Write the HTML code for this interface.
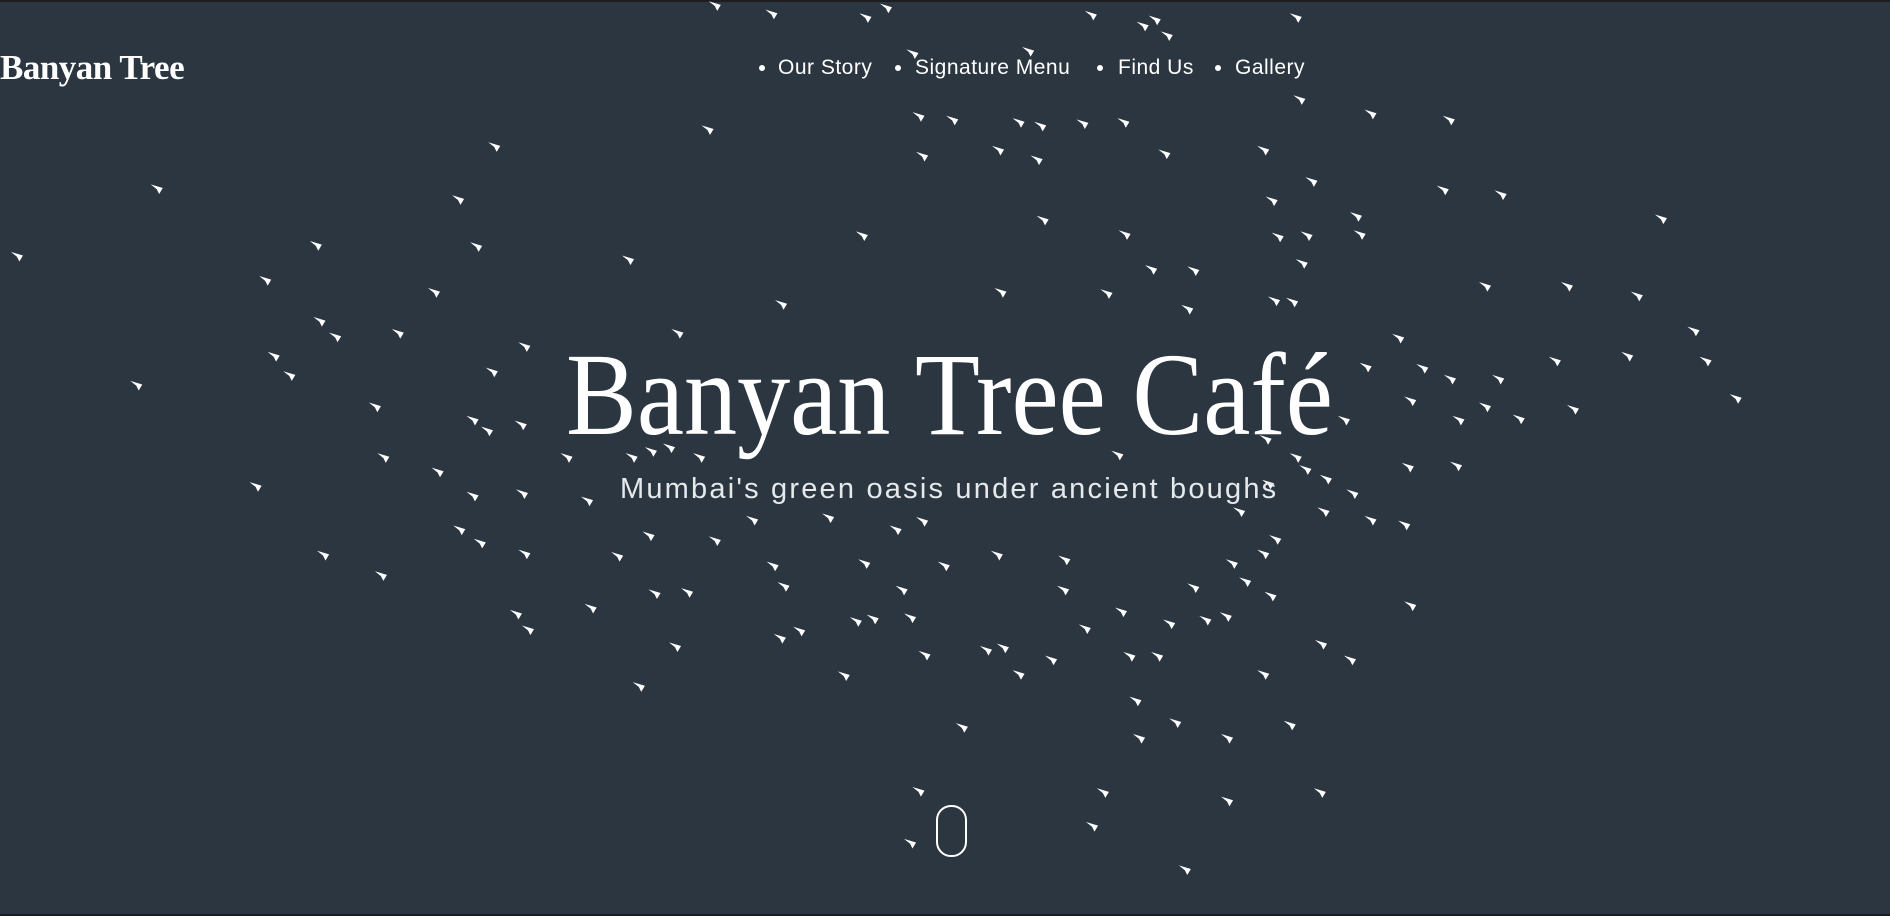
<!DOCTYPE html>
<html><head><meta charset="utf-8">
<style>
html,body{margin:0;padding:0;}
body{width:1890px;height:916px;background:#2b3641;position:relative;overflow:hidden;font-family:"Liberation Sans",sans-serif;color:#fff;}
.bar{position:absolute;left:0;width:1890px;height:2px;background:#1b1d20;}
.logo{position:absolute;left:0;top:49px;font-family:"Liberation Serif",serif;font-weight:bold;font-size:35px;line-height:38px;letter-spacing:-0.5px;}
.nav{position:absolute;top:56px;font-size:21px;line-height:24px;font-weight:500;letter-spacing:0.5px;}
.dot{position:absolute;top:65px;width:6px;height:6px;border-radius:50%;background:#fff;}
.title{position:absolute;left:566px;top:334px;font-family:"Liberation Serif",serif;font-size:118px;line-height:121px;white-space:nowrap;transform:scaleX(0.9);transform-origin:0 0;}
.sub{position:absolute;left:620px;top:473px;font-size:29px;line-height:32px;font-weight:300;color:#e6e9ec;letter-spacing:2.2px;white-space:nowrap;}
.mouse{position:absolute;left:936px;top:805px;width:27px;height:48px;border:2px solid #fff;border-radius:15px;}
svg{position:absolute;left:0;top:0;}
</style></head><body>
<div class="bar" style="top:0"></div>
<div class="bar" style="top:914px"></div>
<svg width="1890" height="916" viewBox="0 0 1568 760">
<defs><polygon id="b" points="-5,-4 5,-1 2,4 0,0" fill="#fff"/></defs>
<g>
<use href="#b" x="593" y="5"/><use href="#b" x="640" y="12"/><use href="#b" x="718" y="15"/><use href="#b" x="735" y="7"/><use href="#b" x="905" y="13"/><use href="#b" x="948" y="22"/><use href="#b" x="958" y="17"/><use href="#b" x="968" y="30"/><use href="#b" x="1075" y="15"/><use href="#b" x="757" y="45"/><use href="#b" x="853" y="43"/><use href="#b" x="1078" y="83"/><use href="#b" x="587" y="108"/><use href="#b" x="410" y="122"/><use href="#b" x="762" y="97"/><use href="#b" x="790" y="100"/><use href="#b" x="845" y="102"/><use href="#b" x="863" y="105"/><use href="#b" x="898" y="103"/><use href="#b" x="932" y="102"/><use href="#b" x="1137" y="95"/><use href="#b" x="1202" y="100"/><use href="#b" x="765" y="130"/><use href="#b" x="828" y="125"/><use href="#b" x="860" y="133"/><use href="#b" x="966" y="128"/><use href="#b" x="1048" y="125"/><use href="#b" x="130" y="157"/><use href="#b" x="380" y="166"/><use href="#b" x="1088" y="151"/><use href="#b" x="1197" y="158"/><use href="#b" x="1245" y="162"/><use href="#b" x="1055" y="167"/><use href="#b" x="865" y="183"/><use href="#b" x="1125" y="180"/><use href="#b" x="1128" y="195"/><use href="#b" x="933" y="195"/><use href="#b" x="1060" y="197"/><use href="#b" x="1084" y="196"/><use href="#b" x="715" y="196"/><use href="#b" x="1378" y="182"/><use href="#b" x="14" y="213"/><use href="#b" x="262" y="204"/><use href="#b" x="395" y="205"/><use href="#b" x="521" y="216"/><use href="#b" x="955" y="224"/><use href="#b" x="990" y="225"/><use href="#b" x="1080" y="219"/><use href="#b" x="220" y="233"/><use href="#b" x="360" y="243"/><use href="#b" x="830" y="243"/><use href="#b" x="918" y="244"/><use href="#b" x="1057" y="250"/><use href="#b" x="1072" y="251"/><use href="#b" x="985" y="257"/><use href="#b" x="1300" y="238"/><use href="#b" x="1232" y="238"/><use href="#b" x="1358" y="246"/><use href="#b" x="648" y="253"/><use href="#b" x="265" y="267"/><use href="#b" x="278" y="280"/><use href="#b" x="330" y="277"/><use href="#b" x="562" y="277"/><use href="#b" x="435" y="288"/><use href="#b" x="227" y="296"/><use href="#b" x="240" y="312"/><use href="#b" x="408" y="309"/><use href="#b" x="1405" y="275"/><use href="#b" x="1415" y="300"/><use href="#b" x="1350" y="296"/><use href="#b" x="1290" y="300"/><use href="#b" x="1160" y="281"/><use href="#b" x="1180" y="306"/><use href="#b" x="1203" y="315"/><use href="#b" x="1243" y="315"/><use href="#b" x="1133" y="305"/><use href="#b" x="113" y="320"/><use href="#b" x="311" y="338"/><use href="#b" x="392" y="349"/><use href="#b" x="404" y="358"/><use href="#b" x="432" y="353"/><use href="#b" x="1210" y="349"/><use href="#b" x="1232" y="338"/><use href="#b" x="1305" y="340"/><use href="#b" x="1260" y="348"/><use href="#b" x="1440" y="331"/><use href="#b" x="1170" y="333"/><use href="#b" x="1115" y="349"/><use href="#b" x="1075" y="380"/><use href="#b" x="1050" y="365"/><use href="#b" x="318" y="380"/><use href="#b" x="363" y="392"/><use href="#b" x="470" y="380"/><use href="#b" x="524" y="380"/><use href="#b" x="540" y="375"/><use href="#b" x="555" y="372"/><use href="#b" x="580" y="380"/><use href="#b" x="927" y="378"/><use href="#b" x="1083" y="390"/><use href="#b" x="1168" y="388"/><use href="#b" x="1208" y="387"/><use href="#b" x="1100" y="398"/><use href="#b" x="1052" y="402"/><use href="#b" x="1122" y="410"/><use href="#b" x="1098" y="425"/><use href="#b" x="1137" y="432"/><use href="#b" x="1165" y="436"/><use href="#b" x="212" y="404"/><use href="#b" x="392" y="412"/><use href="#b" x="433" y="410"/><use href="#b" x="487" y="416"/><use href="#b" x="624" y="432"/><use href="#b" x="687" y="430"/><use href="#b" x="743" y="440"/><use href="#b" x="765" y="433"/><use href="#b" x="1028" y="425"/><use href="#b" x="381" y="440"/><use href="#b" x="398" y="451"/><use href="#b" x="538" y="445"/><use href="#b" x="593" y="449"/><use href="#b" x="268" y="461"/><use href="#b" x="435" y="460"/><use href="#b" x="512" y="462"/><use href="#b" x="641" y="470"/><use href="#b" x="717" y="468"/><use href="#b" x="783" y="470"/><use href="#b" x="827" y="461"/><use href="#b" x="883" y="465"/><use href="#b" x="1048" y="460"/><use href="#b" x="1058" y="448"/><use href="#b" x="1022" y="468"/><use href="#b" x="1033" y="483"/><use href="#b" x="316" y="478"/><use href="#b" x="650" y="487"/><use href="#b" x="748" y="490"/><use href="#b" x="882" y="490"/><use href="#b" x="990" y="488"/><use href="#b" x="1054" y="495"/><use href="#b" x="543" y="493"/><use href="#b" x="570" y="492"/><use href="#b" x="490" y="505"/><use href="#b" x="428" y="510"/><use href="#b" x="438" y="523"/><use href="#b" x="710" y="516"/><use href="#b" x="724" y="514"/><use href="#b" x="755" y="513"/><use href="#b" x="930" y="508"/><use href="#b" x="970" y="518"/><use href="#b" x="1000" y="515"/><use href="#b" x="1017" y="512"/><use href="#b" x="1170" y="503"/><use href="#b" x="647" y="530"/><use href="#b" x="663" y="524"/><use href="#b" x="900" y="522"/><use href="#b" x="560" y="537"/><use href="#b" x="767" y="544"/><use href="#b" x="818" y="540"/><use href="#b" x="832" y="538"/><use href="#b" x="872" y="548"/><use href="#b" x="937" y="545"/><use href="#b" x="960" y="545"/><use href="#b" x="1096" y="535"/><use href="#b" x="1120" y="548"/><use href="#b" x="845" y="560"/><use href="#b" x="700" y="561"/><use href="#b" x="1048" y="560"/><use href="#b" x="530" y="570"/><use href="#b" x="942" y="582"/><use href="#b" x="975" y="600"/><use href="#b" x="1070" y="602"/><use href="#b" x="798" y="604"/><use href="#b" x="945" y="613"/><use href="#b" x="1018" y="613"/><use href="#b" x="762" y="657"/><use href="#b" x="915" y="658"/><use href="#b" x="1018" y="665"/><use href="#b" x="1095" y="658"/><use href="#b" x="906" y="686"/><use href="#b" x="755" y="700"/><use href="#b" x="983" y="722"/>
</g>
</svg>
<div class="logo">Banyan Tree</div>
<div class="dot" style="left:759px"></div><div class="nav" style="left:778px">Our Story</div>
<div class="dot" style="left:895px"></div><div class="nav" style="left:915px">Signature Menu</div>
<div class="dot" style="left:1097px"></div><div class="nav" style="left:1118px">Find Us</div>
<div class="dot" style="left:1215px"></div><div class="nav" style="left:1235px">Gallery</div>
<div class="title">Banyan Tree Café</div>
<div class="sub">Mumbai's green oasis under ancient boughs</div>
<div class="mouse"></div>
</body></html>
